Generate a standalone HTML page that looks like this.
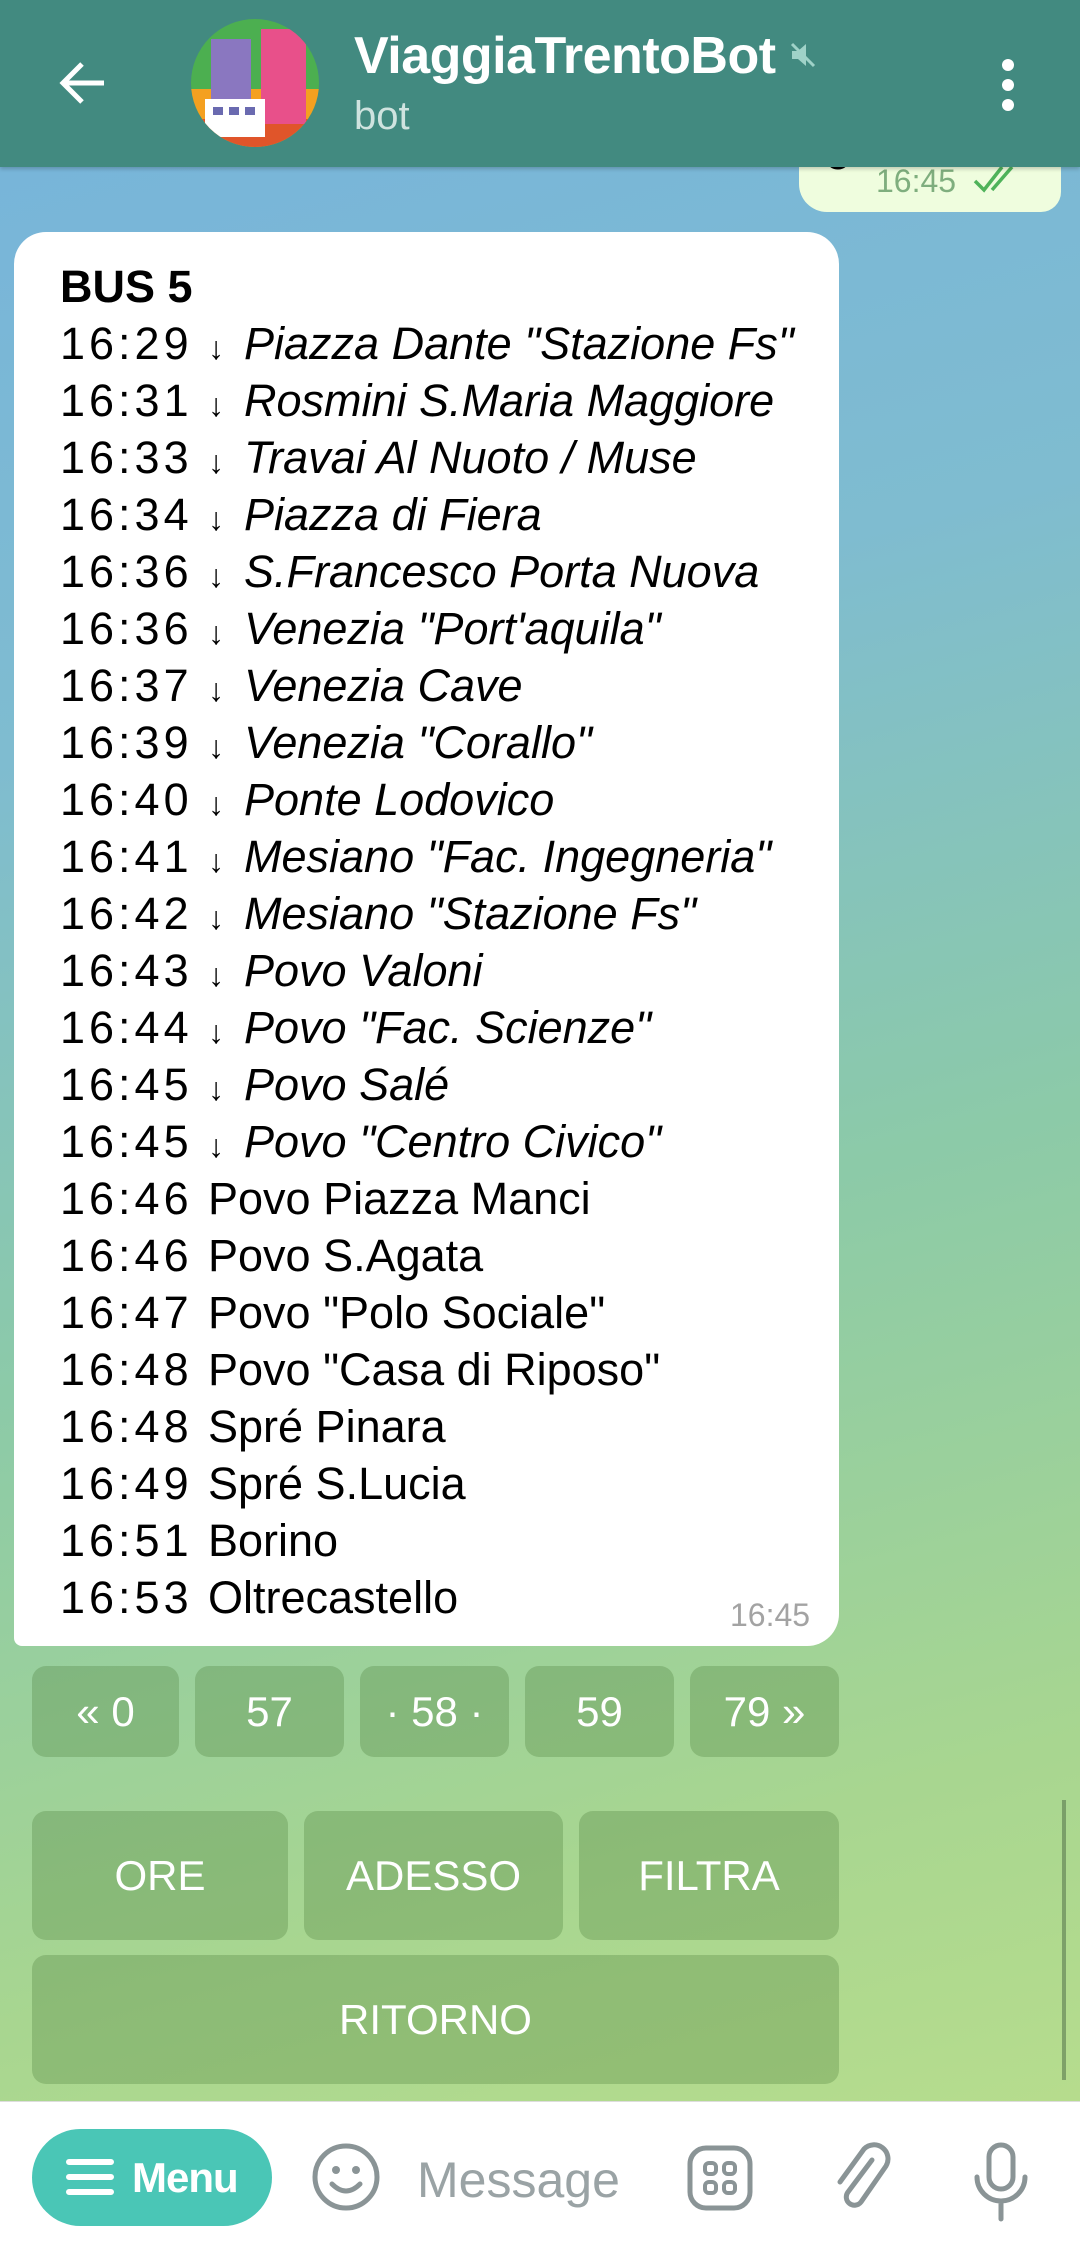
<!DOCTYPE html>
<html><head><meta charset="utf-8">
<style>
*{margin:0;padding:0;box-sizing:border-box}
body{width:1080px;height:2249px;overflow:hidden;font-family:"Liberation Sans",sans-serif;position:relative;
background:linear-gradient(165deg,#76b3dc 0%,#7fbcd0 30%,#8ccaa8 55%,#a8d690 80%,#bcdf8c 100%)}
.hdr{position:absolute;left:0;top:0;width:1080px;height:167px;background:#428a80;box-shadow:0 2px 4px rgba(0,0,0,.2);z-index:5}
.title{position:absolute;left:354px;top:26px;color:#fff;font-size:52px;font-weight:bold;letter-spacing:-0.5px}
.sub{position:absolute;left:354px;top:94px;color:#cfe3df;font-size:40px}
.bubble{position:absolute;left:14px;top:232px;width:825px;height:1414px;background:#fff;border-radius:32px 32px 32px 8px}
.txt{position:absolute;left:60px;top:258px;font-size:45px;color:#000}
.txt div{height:57px;line-height:57px;white-space:nowrap}
.txt i{font-style:italic}
.t{display:inline-block;width:148px;letter-spacing:4px}
.ar{display:inline-block;width:36px;font-size:32px;text-align:left}
.btn{position:absolute;background:rgba(70,120,50,.28);border-radius:14px;color:#fff;font-size:42px;display:flex;align-items:center;justify-content:center}
.bar{position:absolute;left:0;top:2101px;width:1080px;height:148px;background:#fff;border-top:1px solid #ddd}
.menu{position:absolute;left:32px;top:2129px;width:240px;height:97px;border-radius:49px;background:#4ac6b6;color:#fff;font-size:42px;font-weight:bold;display:flex;align-items:center;padding-left:100px;letter-spacing:-1px}
</style></head><body>
<div class="hdr">
<svg style="position:absolute;left:58px;top:60px" width="50" height="46" viewBox="0 0 50 46"><path d="M46 23H6M24 4L5 23l19 19" stroke="#fff" stroke-width="5" fill="none"/></svg>
<svg style="position:absolute;left:191px;top:19px" width="128" height="128" viewBox="0 0 128 128">
<defs><clipPath id="c"><circle cx="64" cy="64" r="64"/></clipPath></defs>
<g clip-path="url(#c)"><rect width="128" height="128" fill="#4caf50"/><rect y="70" width="128" height="60" fill="#f4a020"/><rect y="100" width="128" height="30" fill="#e0552a"/>
<rect x="20" y="20" width="40" height="70" fill="#8a77c0"/><rect x="70" y="10" width="45" height="95" fill="#e8508a"/>
<rect x="14" y="80" width="60" height="38" fill="#fff"/><rect x="22" y="88" width="10" height="8" fill="#6a6ab0"/><rect x="38" y="88" width="10" height="8" fill="#6a6ab0"/><rect x="54" y="88" width="10" height="8" fill="#6a6ab0"/></g></svg>
<div class="title">ViaggiaTrentoBot</div>
<svg style="position:absolute;left:788px;top:40px" width="30" height="30" viewBox="0 0 30 30"><path d="M4 11h6l8-7v22l-8-7H4z" fill="#9fd2c8"/><path d="M4 4l22 22" stroke="#9fd2c8" stroke-width="3"/></svg>
<div class="sub">bot</div>
<svg style="position:absolute;left:998px;top:58px" width="20" height="54"><circle cx="10" cy="7" r="6" fill="#fff"/><circle cx="10" cy="27" r="6" fill="#fff"/><circle cx="10" cy="47" r="6" fill="#fff"/></svg>
</div>
<div style="position:absolute;left:799px;top:150px;width:262px;height:62px;background:#effdde;border-radius:0 0 20px 28px"></div>
<div style="position:absolute;left:826px;top:130px;font-size:44px;color:#000">5</div>
<div style="position:absolute;left:876px;top:163px;font-size:32px;color:#7fae7e">16:45</div>
<svg style="position:absolute;left:972px;top:163px" width="50" height="32" viewBox="0 0 50 32"><path d="M3 18l9 9L30 4M20 27L40 4" stroke="#4fb35a" stroke-width="3.5" fill="none"/></svg>
<div class="bubble"></div>
<div class="txt">
<div><b>BUS 5</b></div>
<div><span class="t">16:29</span><span class="ar">↓</span><i>Piazza Dante "Stazione Fs"</i></div>
<div><span class="t">16:31</span><span class="ar">↓</span><i>Rosmini S.Maria Maggiore</i></div>
<div><span class="t">16:33</span><span class="ar">↓</span><i>Travai Al Nuoto / Muse</i></div>
<div><span class="t">16:34</span><span class="ar">↓</span><i>Piazza di Fiera</i></div>
<div><span class="t">16:36</span><span class="ar">↓</span><i>S.Francesco Porta Nuova</i></div>
<div><span class="t">16:36</span><span class="ar">↓</span><i>Venezia "Port'aquila"</i></div>
<div><span class="t">16:37</span><span class="ar">↓</span><i>Venezia Cave</i></div>
<div><span class="t">16:39</span><span class="ar">↓</span><i>Venezia "Corallo"</i></div>
<div><span class="t">16:40</span><span class="ar">↓</span><i>Ponte Lodovico</i></div>
<div><span class="t">16:41</span><span class="ar">↓</span><i>Mesiano "Fac. Ingegneria"</i></div>
<div><span class="t">16:42</span><span class="ar">↓</span><i>Mesiano "Stazione Fs"</i></div>
<div><span class="t">16:43</span><span class="ar">↓</span><i>Povo Valoni</i></div>
<div><span class="t">16:44</span><span class="ar">↓</span><i>Povo "Fac. Scienze"</i></div>
<div><span class="t">16:45</span><span class="ar">↓</span><i>Povo Salé</i></div>
<div><span class="t">16:45</span><span class="ar">↓</span><i>Povo "Centro Civico"</i></div>
<div><span class="t">16:46</span>Povo Piazza Manci</div>
<div><span class="t">16:46</span>Povo S.Agata</div>
<div><span class="t">16:47</span>Povo "Polo Sociale"</div>
<div><span class="t">16:48</span>Povo "Casa di Riposo"</div>
<div><span class="t">16:48</span>Spré Pinara</div>
<div><span class="t">16:49</span>Spré S.Lucia</div>
<div><span class="t">16:51</span>Borino</div>
<div><span class="t">16:53</span>Oltrecastello</div>
</div>
<div style="position:absolute;left:730px;top:1597px;font-size:32px;color:#a3a3a3">16:45</div>
<div class="btn" style="left:32px;top:1666px;width:147px;height:91px">« 0</div>
<div class="btn" style="left:195px;top:1666px;width:149px;height:91px">57</div>
<div class="btn" style="left:360px;top:1666px;width:149px;height:91px">· 58 ·</div>
<div class="btn" style="left:525px;top:1666px;width:149px;height:91px">59</div>
<div class="btn" style="left:690px;top:1666px;width:149px;height:91px">79 »</div>
<div class="btn" style="left:32px;top:1811px;width:256px;height:129px">ORE</div>
<div class="btn" style="left:304px;top:1811px;width:259px;height:129px">ADESSO</div>
<div class="btn" style="left:579px;top:1811px;width:260px;height:129px">FILTRA</div>
<div class="btn" style="left:32px;top:1955px;width:807px;height:129px">RITORNO</div>
<div style="position:absolute;left:1062px;top:1800px;width:4px;height:280px;background:#5a7a50;opacity:.6"></div>
<div class="bar"></div>
<div class="menu">Menu</div>
<svg style="position:absolute;left:66px;top:2157px" width="48" height="40"><path d="M3 5h42M3 20h42M3 35h42" stroke="#fff" stroke-width="6" stroke-linecap="round"/></svg>
<svg style="position:absolute;left:310px;top:2141px" width="72" height="72" viewBox="0 0 72 72"><circle cx="36" cy="36" r="31" stroke="#8a9496" stroke-width="5" fill="none"/><circle cx="26" cy="29" r="4" fill="#8a9496"/><circle cx="46" cy="29" r="4" fill="#8a9496"/><path d="M22 43q14 14 28 0" stroke="#8a9496" stroke-width="5" fill="none" stroke-linecap="round"/></svg>
<div style="position:absolute;left:417px;top:2151px;font-size:50px;color:#9aa3a5">Message</div>
<svg style="position:absolute;left:686px;top:2144px" width="68" height="68" viewBox="0 0 68 68"><rect x="4" y="4" width="60" height="60" rx="16" stroke="#8a9496" stroke-width="5" fill="none"/><rect x="19" y="19" width="11" height="11" rx="4" stroke="#8a9496" stroke-width="4" fill="none"/><rect x="38" y="19" width="11" height="11" rx="4" stroke="#8a9496" stroke-width="4" fill="none"/><rect x="19" y="38" width="11" height="11" rx="4" stroke="#8a9496" stroke-width="4" fill="none"/><rect x="38" y="38" width="11" height="11" rx="4" stroke="#8a9496" stroke-width="4" fill="none"/></svg>
<svg style="position:absolute;left:832px;top:2140px" width="62" height="76" viewBox="0 0 62 76"><path d="M40 20L16 52a8 8 0 0 0 13 10L54 26a14 14 0 0 0-22-17L8 42" stroke="#8a9496" stroke-width="5" fill="none" stroke-linecap="round"/></svg>
<svg style="position:absolute;left:972px;top:2141px" width="58" height="82" viewBox="0 0 58 82"><rect x="17" y="4" width="24" height="44" rx="12" stroke="#8a9496" stroke-width="5" fill="none"/><path d="M5 36a24 24 0 0 0 48 0M29 60v18" stroke="#8a9496" stroke-width="5" fill="none" stroke-linecap="round"/></svg>
</body></html>
